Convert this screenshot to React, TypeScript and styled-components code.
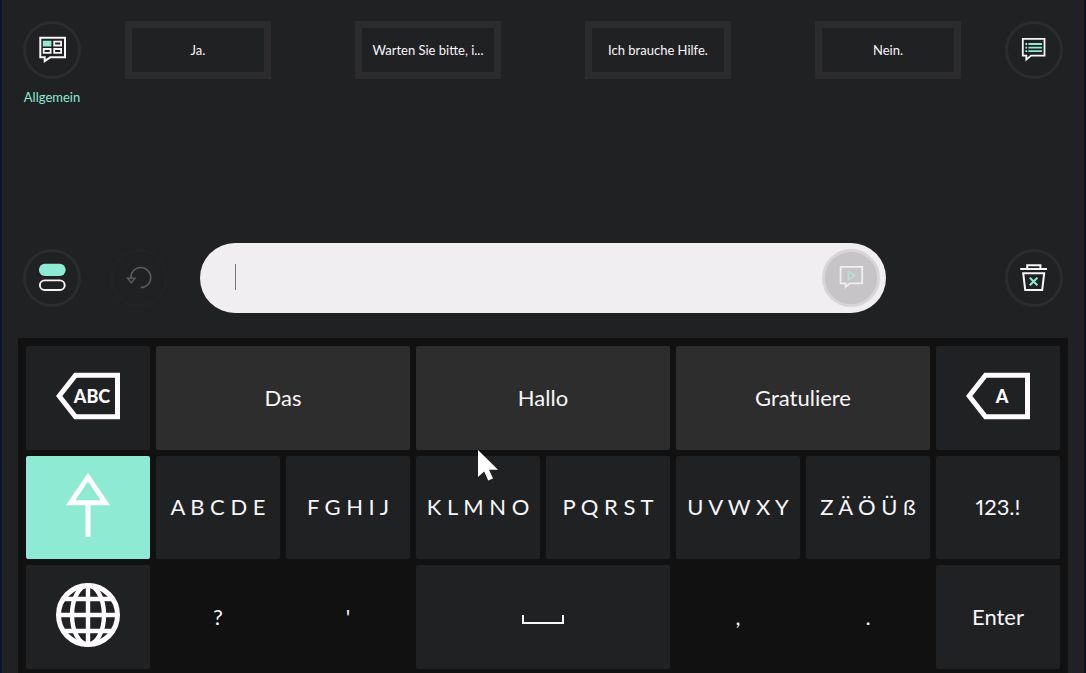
import React from "react";
import styled, { createGlobalStyle } from "styled-components";

const mint = "#8eead3";
const white = "#f8f6f8";

const GlobalStyle = createGlobalStyle`
  *, *::before, *::after { box-sizing: border-box; }
  body { margin: 0; background: #202123; }
  button, input { font: inherit; color: inherit; }
`;

const Page = styled.main`
  display: flex;
  flex-direction: column;
  min-height: 100vh;
  padding: 21px 16px 0;
  border: solid #0c1230;
  border-width: 0 2px;
  background: #202123;
  color: ${white};
  font-family: Lato, "Liberation Sans", sans-serif;
  font-size: 13px;
  line-height: 16px;
`;

const PhraseBar = styled.header`
  display: flex;
  align-items: flex-start;
  gap: 44px;
  min-height: 222px;
  padding: 0 5px;
`;

const Category = styled.div`
  display: flex;
  flex-direction: column;
  align-items: center;
  gap: 10px;
  width: 58px;
`;

const CategoryName = styled.label`
  color: ${mint};
  font-size: 13px;
`;

const RoundButton = styled.button<{ $tone?: "faint" | "light" }>`
  display: flex;
  flex: none;
  align-items: center;
  justify-content: center;
  width: 58px;
  height: 58px;
  padding: 0;
  border: 3px solid
    ${({ $tone }) => ($tone === "light" ? "#d7d5d7" : $tone === "faint" ? "#222325" : "#2b2c2e")};
  border-radius: 50%;
  background: ${({ $tone }) => ($tone === "light" ? "#c6c4c6" : "transparent")};
`;

const Phrases = styled.nav`
  display: grid;
  flex: 1;
  grid-template-columns: repeat(4, minmax(0, 1fr));
  gap: 84px;
`;

const PhraseButton = styled.button`
  height: 58px;
  padding: 0 4px;
  border: 7px solid #2c2c2e;
  background: transparent;
  white-space: nowrap;
`;

const MessageBar = styled.section`
  display: flex;
  align-items: center;
  margin-bottom: 25px;
  padding: 0 5px;
`;

const Tools = styled.div`
  display: flex;
  gap: 29px;
  margin-right: 32px;
`;

const MessageField = styled.div`
  display: flex;
  flex: 1;
  align-items: center;
  height: 70px;
  margin-right: 119px;
  padding: 0 6px 0 35px;
  border-radius: 35px;
  background: #f1eef2;
  color: #202123;
`;

const Caret = styled.span`
  width: 1px;
  height: 26px;
  margin-bottom: 3px;
  background: #77767a;
`;

const MessageInput = styled.input`
  flex: 1;
  min-width: 0;
  height: 48px;
  padding: 0 8px;
  border: 0;
  outline: 0;
  background: transparent;
  font-size: 22px;
`;

const Keyboard = styled.section`
  display: grid;
  flex: 1;
  grid-template-columns: repeat(8, minmax(0, 1fr));
  grid-template-rows: repeat(3, minmax(64px, 1fr));
  gap: 6px;
  padding: 8px 8px 4px;
  background: #111112;
`;

const keyColors = {
  plain: "#202123",
  word: "#2d2d2d",
  active: mint,
  bare: "transparent",
};

const Key = styled.button<{ $kind?: keyof typeof keyColors; $wide?: boolean; $icon?: boolean }>`
  display: flex;
  align-items: center;
  justify-content: center;
  grid-column: span ${({ $wide }) => ($wide ? 2 : 1)};
  min-width: 0;
  padding: 0 0 ${({ $icon }) => ($icon ? 4 : 0)}px;
  border: 0;
  border-radius: 2px;
  background: ${({ $kind = "plain" }) => keyColors[$kind]};
  font-size: 22px;
  font-variant-numeric: proportional-nums;
  line-height: 28px;
  white-space: nowrap;
`;

const Pointer = styled.svg`
  position: absolute;
  top: 449px;
  left: 477px;
  pointer-events: none;
`;

const SmallIcon = ({ children }: { children: React.ReactNode }) => (
  <svg width="40" height="40" viewBox="0 0 40 40" fill="none" stroke={white} strokeWidth="2" aria-hidden="true">
    {children}
  </svg>
);

const LargeIcon = ({ children }: { children: React.ReactNode }) => (
  <svg width="64" height="64" viewBox="0 0 64 64" fill="none" stroke="#fdfbfd" strokeWidth="5" aria-hidden="true">
    {children}
  </svg>
);

const DeleteIcon = ({ text }: { text: string }) => (
  <LargeIcon>
    <path d="M19.5 11.2H61.5V52.8H19.5L3.2 32Z" />
    <text x="36" y="38.5" textAnchor="middle" fill="#fdfbfd" stroke="none" fontSize="18" fontWeight="900">
      {text}
    </text>
  </LargeIcon>
);

const phrases = ["Ja.", "Warten Sie bitte, i...", "Ich brauche Hilfe.", "Nein."];
const words = ["Das", "Hallo", "Gratuliere"];
const letters = ["A B C D E", "F G H I J", "K L M N O", "P Q R S T", "U V W X Y", "Z Ä Ö Ü ß"];

export default function App() {
  return (
    <>
      <GlobalStyle />
      <Page>
        <PhraseBar>
          <Category>
            <RoundButton id="category">
              <SmallIcon>
                <path d="M8.3 7.8H33V27.3H18.2L12.7 31V27.3H8.3Z" />
                <path d="M10.8 10.8h8.6v5.6h-8.6z" fill={mint} stroke="none" />
                <path d="M22.2 11.7h6.9v3.8h-6.9zM11.7 19h6.9v3.8h-6.9zM22.2 19h6.9v3.8h-6.9z" strokeWidth="1.8" />
              </SmallIcon>
            </RoundButton>
            <CategoryName htmlFor="category">Allgemein</CategoryName>
          </Category>
          <Phrases>
            {phrases.map((phrase) => (
              <PhraseButton key={phrase}>{phrase}</PhraseButton>
            ))}
          </Phrases>
          <RoundButton aria-label="Verlauf">
            <SmallIcon>
              <path d="M8.8 8.8H30.5V25.6H17L12.3 29.6V25.6H8.8Z" strokeWidth="1.8" />
              <path d="M11.4 14h1.8M14.4 14H28M11.4 17.6h1.8M14.4 17.6H28M11.4 21.2h1.8M14.4 21.2H28" stroke={mint} strokeWidth="1.8" />
            </SmallIcon>
          </RoundButton>
        </PhraseBar>

        <MessageBar>
          <Tools>
            <RoundButton aria-label="Ansicht wechseln">
              <SmallIcon>
                <rect x="7" y="5.8" width="26.6" height="12.2" rx="5.8" fill={mint} stroke="none" />
                <rect x="7.9" y="22.4" width="24.8" height="9.6" rx="4.8" strokeWidth="1.9" />
              </SmallIcon>
            </RoundButton>
            <RoundButton $tone="faint" disabled aria-label="Rückgängig">
              <SmallIcon>
                <g stroke="#5b5c5e" strokeWidth="1.5">
                  <path d="M11.8 20.2A10 10 0 1 1 21.6 29.6" />
                  <path d="M8.6 20.2h7.4l-3.7 4.7Z" />
                </g>
              </SmallIcon>
            </RoundButton>
          </Tools>
          <MessageField>
            <Caret />
            <MessageInput aria-label="Nachricht" />
            <RoundButton $tone="light" aria-label="Vorlesen">
              <SmallIcon>
                <path d="M9.6 8.8H31.2V25.4H18.8L14.6 29V25.4H9.6Z" stroke="#f1eef2" strokeWidth="1.8" />
                <path d="M17.4 13.4V21.8L23.6 17.6Z" stroke="#b4e2d8" strokeWidth="1.6" />
              </SmallIcon>
            </RoundButton>
          </MessageField>
          <RoundButton aria-label="Alles löschen">
            <SmallIcon>
              <path d="M13.2 10V7.2H26.4V10M6.2 11H33M9.2 15.2H30.2L28.2 31.9H11.2Z" />
              <path d="M15.8 19.7L23.4 27.3M23.4 19.7L15.8 27.3" stroke={mint} />
            </SmallIcon>
          </RoundButton>
        </MessageBar>

        <Keyboard aria-label="Tastatur">
          <Key $icon aria-label="Wort löschen">
            <DeleteIcon text="ABC" />
          </Key>
          {words.map((word) => (
            <Key key={word} $kind="word" $wide>
              {word}
            </Key>
          ))}
          <Key $icon aria-label="Zeichen löschen">
            <DeleteIcon text="A" />
          </Key>

          <Key $kind="active" $icon aria-label="Umschalt">
            <LargeIcon>
              <path d="M32 4.2L49.4 29.8H14.6ZM32 30V64" />
            </LargeIcon>
          </Key>
          {letters.map((group) => (
            <Key key={group}>{group}</Key>
          ))}
          <Key>123.!</Key>

          <Key $icon aria-label="Sprache">
            <LargeIcon>
              <circle cx="32" cy="32" r="29.5" />
              <path d="M32 3V61M3 32H61M8 16H56M8 48H56" strokeWidth="4.4" />
              <ellipse cx="32" cy="32" rx="16" ry="29.5" strokeWidth="4.4" />
            </LargeIcon>
          </Key>
          <Key $kind="bare">?</Key>
          <Key $kind="bare">'</Key>
          <Key $wide aria-label="Leerzeichen">
            <svg width="42" height="16" viewBox="0 0 42 16" fill="none" stroke={white} strokeWidth="2" aria-hidden="true">
              <path d="M1 6V14H41V6" />
            </svg>
          </Key>
          <Key $kind="bare">,</Key>
          <Key $kind="bare">.</Key>
          <Key>Enter</Key>
        </Keyboard>

        <Pointer width="22" height="34" viewBox="0 0 22 34" aria-hidden="true">
          <path d="M1 1V28L7.2 22.4L11.2 31.6L16 29.6L12 20.8H21Z" fill="#fff" />
        </Pointer>
      </Page>
    </>
  );
}
